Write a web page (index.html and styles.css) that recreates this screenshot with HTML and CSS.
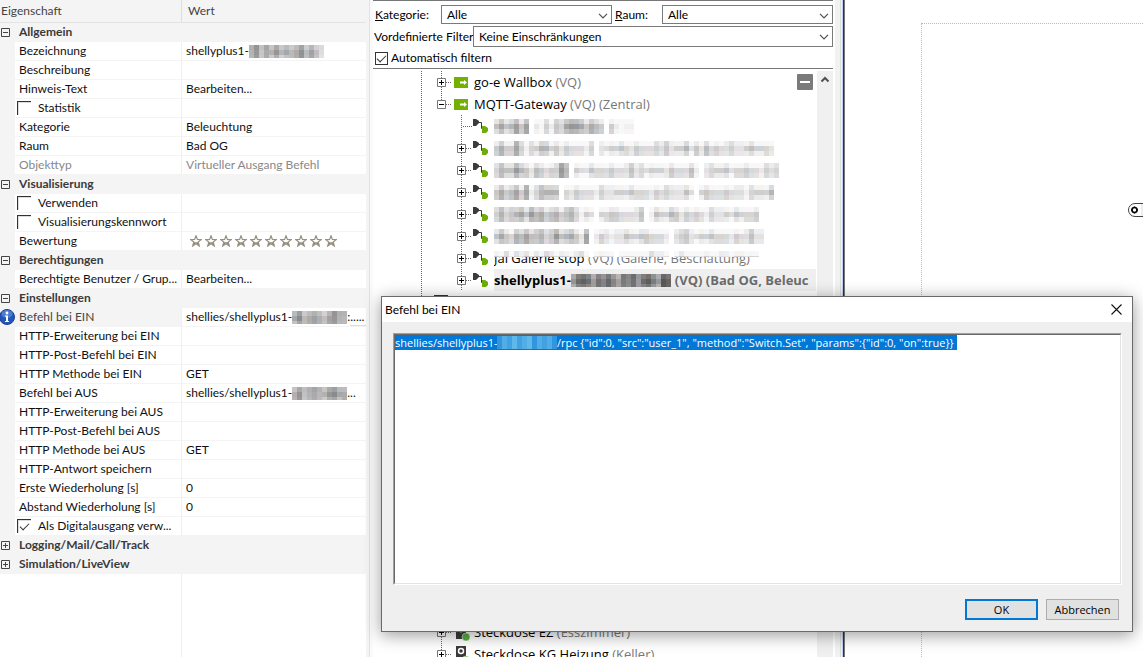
FILE: index.html
```html
<!DOCTYPE html>
<html lang="de">
<head>
<meta charset="utf-8">
<title>Befehl bei EIN</title>
<link rel="stylesheet" href="styles.css">
</head>
<body>
<svg class="defs" aria-hidden="true">
  <symbol id="g-line" viewBox="0 0 20 22"><path d="M9.500 0V22" class="dots"/></symbol>
  <symbol id="g-tee" viewBox="0 0 20 22"><path d="M9.500 0V22M11 11.500H20" class="dots"/></symbol>
  <symbol id="g-plus" viewBox="0 0 20 22"><path d="M9.500 0V22M14 11.500H20" class="dots"/><path d="M5.500 7.500h8v8h-8z" fill="#fff" stroke="#777"/><path d="M7 11.500h5M9.500 9v5" stroke="#000"/></symbol>
  <symbol id="g-minus" viewBox="0 0 20 22"><path d="M9.500 0V7M14 11.500H20" class="dots"/><path d="M5.500 7.500h8v8h-8z" fill="#fff" stroke="#777"/><path d="M7 11.500h5" stroke="#000"/></symbol>
  <symbol id="i-out" viewBox="0 0 14 11"><path d="M0 0h14v11H0z" fill="#74b000"/><path d="M6 4.500h4V3l3 2.500L10 8V6.500H6z" fill="#fff"/></symbol>
  <symbol id="i-relay" viewBox="0 0 15 14"><path d="M0 0h3l3 2v2L3 7H0z" fill="#3b3b3b"/><path d="M6 3.500h2.500v6H10" fill="none" stroke="#3b3b3b"/><path d="M9 7h3l3 2v3l-2 2H9z" fill="#6fae0a"/></symbol>
  <symbol id="i-star" viewBox="0 0 12 12"><path d="M6 .8 7.400 4.500 11.200 4.600 8.200 7 9.300 11 6 8.700 2.700 11 3.800 7 .8 4.600 4.600 4.500z" fill="#fff" stroke="#989080" stroke-width="1.200"/><path d="M3.500 9.500 4.500 7 6 7.500 7.500 7 8.500 9.500 6 8.200z" fill="#857c6c"/></symbol>
  <symbol id="i-open" viewBox="0 0 9 9"><path d="M.5.5h8v8h-8zM2 4.500h5" fill="none" stroke="#444"/></symbol>
  <symbol id="i-closed" viewBox="0 0 9 9"><path d="M.5.5h8v8h-8zM2 4.500h5M4.500 2v5" fill="none" stroke="#444"/></symbol>
  <symbol id="i-down" viewBox="0 0 10 6"><path d="M1 .8 5 4.800 9 .8" fill="none" stroke="#505050" stroke-width="1.200"/></symbol>
</svg>

<main class="app">
  <section class="props">
    <table class="grid">
      <colgroup><col class="c-gutter"><col class="c-name"><col></colgroup>
      <thead><tr><th colspan="2">Eigenschaft</th><th class="wert">Wert</th></tr></thead>
      <tbody>
        <tr class="cat"><td><svg class="tog"><use href="#i-open"/></svg></td><th colspan="2">Allgemein</th></tr>
        <tr><td></td><td>Bezeichnung</td><td><span class="val">shellyplus1-<i class="mosaic" data-m="75868687875868a"></i></span></td></tr>
        <tr><td></td><td>Beschreibung</td><td></td></tr>
        <tr><td></td><td>Hinweis-Text</td><td>Bearbeiten...</td></tr>
        <tr><td></td><td><label class="chk"><input type="checkbox">Statistik</label></td><td></td></tr>
        <tr><td></td><td>Kategorie</td><td>Beleuchtung</td></tr>
        <tr><td></td><td>Raum</td><td>Bad OG</td></tr>
        <tr class="off"><td></td><td>Objekttyp</td><td>Virtueller Ausgang Befehl</td></tr>
        <tr class="cat"><td><svg class="tog"><use href="#i-open"/></svg></td><th colspan="2">Visualisierung</th></tr>
        <tr><td></td><td><label class="chk"><input type="checkbox">Verwenden</label></td><td></td></tr>
        <tr><td></td><td><label class="chk"><input type="checkbox">Visualisierungskennwort</label></td><td></td></tr>
        <tr><td></td><td>Bewertung</td><td><span class="stars"><svg><use href="#i-star"/></svg><svg><use href="#i-star"/></svg><svg><use href="#i-star"/></svg><svg><use href="#i-star"/></svg><svg><use href="#i-star"/></svg><svg><use href="#i-star"/></svg><svg><use href="#i-star"/></svg><svg><use href="#i-star"/></svg><svg><use href="#i-star"/></svg><svg><use href="#i-star"/></svg></span></td></tr>
        <tr class="cat"><td><svg class="tog"><use href="#i-open"/></svg></td><th colspan="2">Berechtigungen</th></tr>
        <tr><td></td><td>Berechtigte Benutzer / Grup...</td><td>Bearbeiten...</td></tr>
        <tr class="cat"><td><svg class="tog"><use href="#i-open"/></svg></td><th colspan="2">Einstellungen</th></tr>
        <tr class="current"><td><svg class="info" viewBox="0 0 16 16"><circle cx="8" cy="8" r="7.500" fill="#2456b8" stroke="#174091"/><ellipse cx="8" cy="5" rx="5.500" ry="4" fill="#6d95dd" opacity=".6"/><circle cx="8" cy="4" r="1.400" fill="#fff"/><path d="M6 6.500h3V12h1v1H6v-1h1V7.500H6z" fill="#fff"/></svg></td><td>Befehl bei EIN</td><td><span class="val">shellies/shellyplus1-<i class="mosaic" data-m="75876786577"></i>:<button class="more" type="button" aria-label="Bearbeiten">.....</button></span></td></tr>
        <tr><td></td><td>HTTP-Erweiterung bei EIN</td><td></td></tr>
        <tr><td></td><td>HTTP-Post-Befehl bei EIN</td><td></td></tr>
        <tr><td></td><td>HTTP Methode bei EIN</td><td>GET</td></tr>
        <tr><td></td><td>Befehl bei AUS</td><td><span class="val">shellies/shellyplus1-<i class="mosaic" data-m="75876786577"></i>...</span></td></tr>
        <tr><td></td><td>HTTP-Erweiterung bei AUS</td><td></td></tr>
        <tr><td></td><td>HTTP-Post-Befehl bei AUS</td><td></td></tr>
        <tr><td></td><td>HTTP Methode bei AUS</td><td>GET</td></tr>
        <tr><td></td><td>HTTP-Antwort speichern</td><td></td></tr>
        <tr><td></td><td>Erste Wiederholung [s]</td><td>0</td></tr>
        <tr><td></td><td>Abstand Wiederholung [s]</td><td>0</td></tr>
        <tr><td></td><td><label class="chk"><input type="checkbox" checked>Als Digitalausgang verw...</label></td><td></td></tr>
        <tr class="cat"><td><svg class="tog"><use href="#i-closed"/></svg></td><th colspan="2">Logging/Mail/Call/Track</th></tr>
        <tr class="cat"><td><svg class="tog"><use href="#i-closed"/></svg></td><th colspan="2">Simulation/LiveView</th></tr>
      </tbody>
    </table>
    <div class="rest"></div>
  </section>
  <div class="split"></div>

  <section class="periphery">
    <form class="filters">
      <div class="line">
        <label class="l-kat" for="kat"><u>K</u>ategorie:</label>
        <span class="combo"><select id="kat"><option>Alle</option></select><svg><use href="#i-down"/></svg></span>
        <label class="l-raum" for="raum"><u>R</u>aum:</label>
        <span class="combo"><select id="raum"><option>Alle</option></select><svg><use href="#i-down"/></svg></span>
      </div>
      <div class="line">
        <label class="l-filter" for="vor">Vordefinierte Filter</label>
        <span class="combo tall"><select id="vor"><option>Keine Einschränkungen</option></select><svg><use href="#i-down"/></svg></span>
      </div>
      <label class="auto"><input type="checkbox" checked>Automatisch filtern</label>
    </form>
    <div class="treewrap">
      <ul class="tree">
        <li><svg class="g"><use href="#g-line"/></svg><svg class="g"><use href="#g-plus"/></svg><svg class="out"><use href="#i-out"/></svg><span class="t">go-e Wallbox <em>(VQ)</em></span></li>
        <li><svg class="g"><use href="#g-line"/></svg><svg class="g"><use href="#g-minus"/></svg><svg class="out"><use href="#i-out"/></svg><span class="t">MQTT-Gateway <em>(VQ) (Zentral)</em></span></li>
        <li><svg class="g"><use href="#g-line"/></svg><i class="g"></i><svg class="g"><use href="#g-tee"/></svg><svg class="relay"><use href="#i-relay"/></svg><i class="mosaic light" data-m="9798696.bc9b8976679789.9bcbb"></i></li>
        <li><svg class="g"><use href="#g-line"/></svg><i class="g"></i><svg class="g"><use href="#g-plus"/></svg><svg class="relay"><use href="#i-relay"/></svg><i class="mosaic light" data-m="979969b9a88a9b9aaab9.abaa9ab9aaa9a8aaa8b9b8a9aa9aaa9aaab"></i></li>
        <li><svg class="g"><use href="#g-line"/></svg><i class="g"></i><svg class="g"><use href="#g-plus"/></svg><svg class="relay"><use href="#i-relay"/></svg><i class="mosaic light" data-m="9799689b89a9957.abb9aaa9aaa8a9baaab9aaa8b.a9aa9baa9aab9a9"></i></li>
        <li><svg class="g"><use href="#g-line"/></svg><i class="g"></i><svg class="g"><use href="#g-plus"/></svg><svg class="relay"><use href="#i-relay"/></svg><i class="mosaic light" data-m="9798696b97888.ab9aaab9aaaaa9aaab9a9aaa9b.a9aaa9aaab9aaa8"></i></li>
        <li><svg class="g"><use href="#g-line"/></svg><i class="g"></i><svg class="g"><use href="#g-plus"/></svg><svg class="relay"><use href="#i-relay"/></svg><i class="mosaic light" data-m="97988796879879879bab.aa99aaaa8.b9aa89b9a9ab9aaab9aaa9"></i></li>
        <li><svg class="g"><use href="#g-line"/></svg><i class="g"></i><svg class="g"><use href="#g-plus"/></svg><svg class="relay"><use href="#i-relay"/></svg><i class="mosaic light" data-m="979a7868879869879b6.b9abaa9aa99aaab.a98abaa9aaab9aa8aa"></i></li>
        <li><svg class="g"><use href="#g-line"/></svg><i class="g"></i><svg class="g"><use href="#g-plus"/></svg><svg class="relay"><use href="#i-relay"/></svg><span class="t under">Jal Galerie stop <em>(VQ) (Galerie, Beschattung)</em><i class="mosaic light cover" data-m="9a9b9a9b9a89a99ba9b.baab.baabab9aab.b9abab9abaabaabaa"></i></span></li>
        <li><svg class="g"><use href="#g-line"/></svg><i class="g"></i><svg class="g"><use href="#g-plus"/></svg><svg class="relay"><use href="#i-relay"/></svg><strong class="t sel">shellyplus1-<i class="mosaic" data-m="63236342463425324612"></i><em>(VQ) (Bad OG, Beleuc</em></strong></li>
        <li><svg class="g"><use href="#g-line"/></svg><i class="bar"></i></li>
        <li class="hidden-rows"></li>
        <li><i class="g"></i><svg class="g"><use href="#g-plus"/></svg><svg class="plug" viewBox="0 0 16 18"><path d="M2 0h10v16H2z" fill="#3b3b3b"/><circle cx="7" cy="6" r="3" fill="none" stroke="#fff"/><circle cx="12" cy="14" r="4" fill="#57ad43" stroke="#fff" stroke-width=".5"/></svg><span class="t">Steckdose EZ <em>(Esszimmer)</em></span></li>
        <li><i class="g"></i><svg class="g"><use href="#g-plus"/></svg><svg class="plug" viewBox="0 0 16 18"><path d="M2 1h10v16H2z" fill="#3b3b3b"/><circle cx="7" cy="6" r="2.500" fill="none" stroke="#fff" stroke-width="1.500"/><circle cx="12" cy="15" r="4" fill="#57ad43" stroke="#fff" stroke-width=".5"/></svg><span class="t">Steckdose KG Heizung <em>(Keller)</em></span></li>
      </ul>
      <button class="collapse" type="button" aria-label="Zuklappen"></button>
      <div class="scroll"><svg viewBox="0 0 10 7"><path d="M1.500 5.500 5 2 8.500 5.500" fill="none" stroke="#505050" stroke-width="2"/></svg></div>
    </div>
  </section>
  <div class="frame"></div>
  <section class="canvas">
    <div class="page"></div>
    <svg class="pin" viewBox="0 0 16 14"><path d="M16 .5H7a6.500 6.500 0 0 0 0 13h9" fill="#fff" stroke="#444"/><path d="M13 1h3v12h-3z" fill="#eee"/><circle cx="6.500" cy="7" r="2.500" fill="none" stroke="#000" stroke-width="1.600"/><path d="M6.500 3.500v1M6.500 9.500v1M3 7h1M9 7h1" stroke="#000" stroke-width="1.500"/></svg>
  </section>
</main>

<div class="dialog" role="dialog" aria-labelledby="dt">
  <header><h1 id="dt">Befehl bei EIN</h1><button class="close" type="button" aria-label="Schließen"><svg viewBox="0 0 11 11"><path d="M.5.5l10 10M10.500.5l-10 10" stroke="#111" stroke-width="1.100"/></svg></button></header>
  <div class="field">
    <textarea id="cmd" aria-label="Befehl" spellcheck="false">shellies/shellyplus1-000000000l/rpc {"id":0, "src":"user_1", "method":"Switch.Set", "params":{"id":0, "on":true}} </textarea>
    <i class="mosaic blue" data-m="243534524342"></i>
  </div>
  <footer><button class="btn primary" type="button">OK</button><button class="btn" type="button">Abbrechen</button></footer>
</div>
<script src="app.js"></script>
</body>
</html>
```
FILE: styles.css
```css
* { box-sizing: border-box; }
body { margin: 0; background: #fff; color: #111; font: 12px/18px "Open Sans", "Noto Sans", sans-serif; height: 100vh; overflow: hidden; position: relative; }
button, select, textarea, input { font: inherit; color: inherit; margin: 0; border-radius: 0; }
.defs { position: absolute; width: 0; height: 0; }
.dots { stroke: #666; stroke-dasharray: 1 1; fill: none; }
.app { display: grid; grid-template-columns: 366px 7px 460px 13px minmax(0, 1fr); height: 100%; }

.props { display: flex; flex-direction: column; min-height: 0; font-family: Lato, "Open Sans", sans-serif; }
.grid { width: 100%; table-layout: fixed; border-collapse: separate; border-spacing: 0; }
.c-gutter { width: 15px; }
.c-name { width: 166px; }
.grid th, .grid td { padding: 0 0 0 4px; height: 19px; line-height: 18px; text-align: left; white-space: nowrap; overflow: hidden; border-bottom: 1px solid #f4f4f4; }
.grid thead th { height: 23px; padding-left: 1px; font-weight: 400; color: #444; background: #f4f4f4; border-bottom-color: #e4e4e4; }
.grid thead .wert { padding-left: 6px; border-left: 1px solid #ddd; }
.grid tbody td:first-child { background: #f4f4f4; padding: 0; overflow: visible; }
.grid td + td + td { border-left: 1px solid #f0f0f0; }
.grid .cat th { background: #f4f4f4; font-weight: 700; color: #3a3a3a; }
.off { color: #888; }
.current td:nth-child(2) { background: #f4f4f4; color: #444; }
.tog { display: block; width: 9px; height: 9px; margin-left: 1px; }
.info { display: block; width: 16px; height: 16px; margin-left: -1px; }
.val { display: flex; align-items: center; height: 18px; }
.more { margin-left: auto; padding: 0 4px 0 0; height: 18px; border: 0; border-right: 1px solid #ddd; border-bottom: 1px solid #ddd; background: #fff; line-height: 17px; }
.chk { display: flex; align-items: center; gap: 7px; margin-left: -2px; }
.chk input { appearance: none; width: 14px; height: 14px; background: #fff; border: 0 solid #333; border-width: 1px 0 0 1px; box-shadow: inset 1px 1px #ddd; display: grid; place-items: center; }
.chk input:checked::after, .auto input:checked::after { content: ""; width: 8px; height: 4px; border: solid #333; border-width: 0 0 1px 1px; transform: translateY(-1px) rotate(-45deg); }
.stars { display: flex; gap: 3px; padding-left: 4px; }
.stars svg { width: 12px; height: 12px; }
.rest { flex: 1; border-left: 182px solid #fff; position: relative; }
.rest::before { content: ""; position: absolute; left: -1px; top: 0; bottom: 0; width: 1px; background: #eee; }
.split { background: #f4f4f4; border-right: 3px solid #fafafa; box-shadow: inset -1px 0 #e2e2e2; }

.periphery { display: flex; flex-direction: column; min-width: 0; min-height: 0; border-top: 1px solid #777; }
.filters { display: flex; flex-direction: column; gap: 2px; padding-top: 4px; border-bottom: 1px solid #777; height: 68px; color: #000; font-family: Lato, "Open Sans", sans-serif; }
.line { display: flex; align-items: center; padding-left: 1px; }
.l-kat { width: 67px; padding-left: 1px; }
.l-raum { width: 50px; padding-left: 3px; }
.l-filter { width: 99px; white-space: nowrap; }
.combo { flex: 1; position: relative; display: flex; }
.combo select { appearance: none; width: 100%; height: 19px; padding: 0 5px; border: 1px solid #7a7a7a; background: #fff; line-height: 16px; }
.combo.tall select { height: 21px; }
.combo svg { position: absolute; right: 4px; top: 8px; width: 10px; height: 6px; pointer-events: none; }
.auto { display: flex; align-items: center; gap: 3px; padding: 0 2px; }
.auto input { appearance: none; width: 13px; height: 13px; border: 1px solid #333; display: grid; place-items: center; }

.treewrap { flex: 1; min-height: 0; position: relative; display: flex; padding-top: 2px; }
.tree { flex: 1; min-width: 0; margin: 0; padding: 0 1px 0 39px; list-style: none; overflow: hidden; font-size: 13px; line-height: 22px; color: #000; }
.tree li { display: flex; align-items: center; height: 22px; white-space: nowrap; }
.tree em { font-style: normal; color: #777; }
.g { flex: 0 0 20px; width: 20px; height: 22px; }
.out { flex: none; width: 14px; height: 11px; margin: 0 6px 0 2px; }
.relay { flex: none; width: 15px; height: 14px; margin: 0 6px 0 1px; }
.plug { flex: none; width: 16px; height: 18px; margin: 0 4px 0 2px; }
.t { flex: 1; min-width: 0; overflow: hidden; }
.under { position: relative; }
.cover { position: absolute; left: 0; top: 4px; height: 6px; overflow: hidden; background: #fff; }
.sel { display: flex; align-items: center; background: #efefef; }
.sel em { margin-left: 4px; }
.tree .sel em { color: #6c6c6c; }
.bar { width: 14px; height: 14px; margin-left: 2px; background: #333; }
.tree .hidden-rows { height: 308px; }
.collapse { position: absolute; right: 20px; top: 5px; width: 16px; height: 16px; padding: 0; border: 0; border-radius: 1px; background: #7a7a7a; }
.collapse::after { content: ""; display: block; width: 10px; height: 2px; margin: 0 auto; background: #fff; }
.scroll { width: 16px; background: #f0f0f0; display: flex; justify-content: center; padding-top: 5px; }
.scroll svg { width: 10px; height: 7px; }
.frame { background: linear-gradient(90deg, #fff 0 2px, #f2f2f2 2px 7px, #ddd 7px 8px, #f2f2f2 8px 9px, #c0d0f0 9px 10px, #333 10px 11px, #777 11px 12px, #fff 12px); }
.canvas { position: relative; background: #fff; display: flex; padding: 23px 0 0 75px; }
.page { flex: 1; border: 1px dotted #bbb; border-width: 1px 0 0 1px; }
.pin { position: absolute; right: -1px; top: 203px; width: 16px; height: 14px; }

.mosaic { display: block; flex: none; }
.mosaic svg { display: block; }

.dialog { position: absolute; left: 381px; right: 10px; top: 296px; bottom: 25px; display: flex; flex-direction: column; background: #efefef; border: 1px solid #6a6a6a; box-shadow: 0 3px 16px rgba(0, 0, 0, .4); color: #000; }
.dialog header { display: flex; align-items: center; justify-content: space-between; height: 25px; padding: 0 10px 0 3px; background: #fff; }
.dialog h1 { margin: 0; font: 400 12px/18px Lato, "Open Sans", sans-serif; }
.close { display: flex; padding: 0; border: 0; background: none; }
.close svg { width: 11px; height: 11px; }
.field { position: relative; flex: 1; display: flex; margin: 11px 10px 0 11px; border: 1px solid; border-color: #a0a0a0 #fff #fff #a0a0a0; }
.field textarea { flex: 1; resize: none; outline: 0; padding: 1px 0; border: 1px solid; border-color: #696969 #e3e3e3 #e3e3e3 #696969; background: #fff; font-size: 11px; line-height: 13px; }
.field textarea::selection { background: #0078d7; color: #fff; }
.field .mosaic { position: absolute; left: 103px; top: 2px; width: 60px; background: #0078d7; }
.dialog footer { display: flex; justify-content: flex-end; gap: 8px; padding: 14px 13px 11px; }
.btn { width: 73px; height: 21px; padding: 0; border: 1px solid #adadad; background: #e1e1e1; font-size: 11px; line-height: 17px; }
.primary { border: 2px solid #0078d7; }
```
FILE: app.js
```js
// Draws each censor strip as a grid of 5px blocks; a digit is a brightness, a dot is a gap.
const tints = [[0, 0, 0], [-3, 0, 4], [4, 1, -3], [-2, 2, 2], [3, -2, 3], [0, 0, 0], [3, 2, 0]];
document.querySelectorAll(".mosaic").forEach((el, n) => {
  const levels = el.dataset.m;
  const light = el.classList.contains("light");
  const blue = el.classList.contains("blue");
  const height = light ? 15 : 13;
  let cells = "";
  for (let row = 0; row < 3; row++) {
    [...levels].forEach((c, i) => {
      if (c === ".") return;
      const v = parseInt(c, 16);
      const k = (i * 7 + row * 5 + n * 3 + (i >> 1)) % 7;
      let rgb;
      if (blue) {
        rgb = [20 + v * 15, 125 + v * 12, 217 + v * 3];
      } else {
        const lift = light ? [30, 0, 14][row] : [12, 0, 10][row];
        const base = (light ? 75 : 75) + v * 14 + lift + (k - 3) * 3;
        rgb = tints[k].map(t => Math.min(248, base + t));
      }
      cells += `<rect x="${i * 5}" y="${row * 5}" width="5" height="5" fill="rgb(${rgb})"/>`;
    });
  }
  const w = levels.length * 5;
  el.innerHTML = `<svg width="${w}" height="${height}" viewBox="0 0 ${w} ${height}" shape-rendering="crispEdges">${cells}</svg>`;
});
const cmd = document.getElementById("cmd");
cmd.focus();
cmd.select();
```
